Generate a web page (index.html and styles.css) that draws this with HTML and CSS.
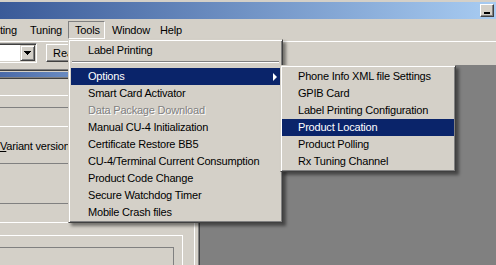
FILE: index.html
```html
<!DOCTYPE html>
<html>
<head>
<meta charset="utf-8">
<link rel="stylesheet" href="styles.css">
</head>
<body>
<div class="window">
  <div class="titlebar">
    <div class="capbtn"><span class="min-glyph"></span></div>
  </div>
  <div class="menubar">
    <span class="mi mi-ting">ting</span>
    <span class="mi mi-tuning">Tuning</span>
    <span class="mi mi-tools active">Tools</span>
    <span class="mi mi-window">Window</span>
    <span class="mi mi-help">Help</span>
  </div>
  <div class="toolbar">
    <div class="combo">
      <div class="combo-field"></div>
      <div class="combo-btn"><svg class="down" width="7" height="4" viewBox="0 0 7 4"><path d="M0 0H7L3.5 4Z" fill="#000"/></svg></div>
    </div>
    <div class="btn">Read</div>
  </div>
  <div class="client">
    <div class="child">
      <div class="c-edge"></div>
      <div class="c-bar"></div>
      <div class="c-body">
        <div class="r1"></div>
        <div class="r2"></div>
        <div class="lbl"><span class="ul">V</span>ariant version</div>
        <div class="r4"></div>
        <div class="r5"></div>
        <div class="r6"><div class="r6-inner"></div></div>
      </div>
    </div>
    <div class="mdi"></div>
  </div>

  <div class="menu main-menu">
    <div class="item">Label Printing</div>
    <div class="sep"></div>
    <div class="item hl">Options<span class="arrow"></span></div>
    <div class="item">Smart Card Activator</div>
    <div class="item disabled">Data Package Download</div>
    <div class="item">Manual CU-4 Initialization</div>
    <div class="item">Certificate Restore BB5</div>
    <div class="item">CU-4/Terminal Current Consumption</div>
    <div class="item">Product Code Change</div>
    <div class="item">Secure Watchdog Timer</div>
    <div class="item">Mobile Crash files</div>
  </div>

  <div class="menu sub-menu">
    <div class="item">Phone Info XML file Settings</div>
    <div class="item">GPIB Card</div>
    <div class="item">Label Printing Configuration</div>
    <div class="item hl">Product Location</div>
    <div class="item">Product Polling</div>
    <div class="item">Rx Tuning Channel</div>
  </div>
</div>
</body>
</html>
```
FILE: styles.css
```css
html, body {
  margin: 0;
  padding: 0;
}
body {
  width: 496px;
  height: 265px;
  overflow: hidden;
  background: #d4d0c8;
  font-family: "Liberation Sans", Arial, sans-serif;
  font-size: 11px;
  color: #000;
}
.window {
  position: relative;
  width: 496px;
  height: 265px;
  overflow: hidden;
  background: #d4d0c8;
}
.titlebar {
  height: 15px;
  border-top: 2px solid #d4d0c8;
  background: linear-gradient(to right, #3a5a98, #a8ccf2);
  display: flex;
  justify-content: flex-end;
  align-items: flex-start;
  padding: 2px 2px 0 0;
}
.capbtn {
  width: 14px;
  height: 13px;
  box-sizing: border-box;
  background: #d4d0c8;
  border: 1px solid;
  border-color: #fff #404040 #404040 #fff;
  box-shadow: inset -1px -1px #808080;
  display: flex;
  align-items: flex-end;
  padding: 0 0 2px 3px;
}
.min-glyph {
  display: block;
  width: 6px;
  height: 2px;
  background: #000;
}
.menubar {
  height: 22px;
  display: flex;
  align-items: flex-start;
  letter-spacing: -0.2px;
}
.mi {
  display: block;
  box-sizing: border-box;
  height: 18px;
  margin-top: 2px;
  border: 1px solid transparent;
  padding-left: 6px;
  line-height: 16px;
  white-space: nowrap;
  overflow: hidden;
}
.mi-ting { width: 30px; margin-left: -7px; }
.mi-tuning { width: 45px; }
.mi-tools { width: 37px; }
.mi-window { width: 48px; }
.mi-help { width: 35px; }
.mi.active {
  border-color: #808080 #fff #fff #808080;
}
.toolbar {
  height: 23px;
  border-top: 1px solid #fff;
  display: flex;
  align-items: flex-start;
}
.combo {
  display: flex;
  box-sizing: border-box;
  width: 37px;
  height: 20px;
  margin-top: 1px;
  border-top: 1px solid #808080;
  border-right: 1px solid #fff;
  border-bottom: 1px solid #fff;
  box-shadow: inset 0 1px #404040, inset -1px -1px #d4d0c8;
  padding: 1px 1px 1px 0;
}
.combo-field {
  flex: 1;
  background: #fff;
}
.combo-btn {
  width: 15px;
  box-sizing: border-box;
  background: #d4d0c8;
  border: 1px solid;
  border-color: #d4d0c8 #404040 #404040 #d4d0c8;
  box-shadow: inset 1px 1px #fff, inset -1px -1px #808080;
  display: flex;
  align-items: center;
  justify-content: center;
}
.down { display: block; shape-rendering: crispEdges; }
.btn {
  box-sizing: border-box;
  height: 18px;
  width: 70px;
  margin: 2px 0 0 9px;
  border: 1px solid;
  border-color: #fff #404040 #404040 #fff;
  box-shadow: inset -1px -1px #808080;
  padding-left: 6px;
  line-height: 16px;
}
.client {
  display: flex;
  height: 200px;
}
.mdi {
  flex: 1;
  background: #808080;
}
.child {
  width: 200px;
  box-sizing: border-box;
  background: #d4d0c8;
  border-right: 1px solid #404040;
  box-shadow: inset -1px 0 #808080;
  padding-top: 4px;
  display: flex;
  flex-direction: column;
}
.c-edge {
  height: 0;
  border-top: 1px solid #808080;
  border-bottom: 1px solid #404040;
  margin-bottom: 1px;
}
.c-bar {
  height: 21px;
  background: linear-gradient(to right, #4a6aa8, #a6caf0);
  border-bottom: 1px solid #808080;
  box-shadow: 0 1px #404040;
  margin-bottom: 1px;
}
.c-body {
  flex: 1;
  margin-right: 4px;
  border-right: 1px solid #fff;
  display: flex;
  flex-direction: column;
  align-items: flex-start;
}
.r1 {
  width: 190px;
  height: 16px;
  border-bottom: 1px solid #fff;
}
.r2 {
  width: 190px;
  height: 18px;
  margin-top: 11px;
  border-top: 1px solid #808080;
  border-bottom: 1px solid #fff;
}
.lbl {
  margin-top: 12px;
  line-height: 14px;
  white-space: nowrap;
  letter-spacing: -0.2px;
}
.ul { text-decoration: underline; }
.r4 {
  width: 190px;
  height: 39px;
  margin-top: 10px;
  border-top: 1px solid #808080;
}
.r5 {
  width: 173px;
  box-sizing: border-box;
  height: 20px;
  border-top: 1px solid #808080;
  border-right: 1px solid #fff;
  border-bottom: 1px solid #fff;
}
.r6 {
  width: 183px;
  box-sizing: border-box;
  height: 30px;
  margin-top: 12px;
  border-top: 1px solid #fff;
  border-right: 1px solid #fff;
  padding-top: 11px;
}
.r6-inner {
  width: 174px;
  box-sizing: border-box;
  height: 20px;
  border-top: 1px solid #808080;
  border-right: 1px solid #808080;
}
.menu {
  position: absolute;
  box-sizing: border-box;
  background: #d4d0c8;
  border: 1px solid;
  border-color: #d4d0c8 #404040 #404040 #d4d0c8;
  box-shadow: inset 1px 1px #fff, inset -1px -1px #808080, 3px 3px 3px rgba(0,0,0,0.45);
  letter-spacing: -0.2px;
}
.main-menu {
  left: 68px;
  top: 39px;
  width: 215px;
  padding: 2px 2px 1px 2px;
  z-index: 1;
}
.sub-menu {
  left: 280px;
  top: 65px;
  width: 176px;
  padding: 2px 1px 1px 1px;
  z-index: 2;
}
.item {
  height: 17px;
  line-height: 17px;
  white-space: nowrap;
  display: flex;
  align-items: center;
}
.main-menu .item { padding-left: 17px; }
.sub-menu .item { padding-left: 16px; }
.item.hl {
  background: #0a246a;
  color: #fff;
}
.item.disabled {
  color: #808080;
  text-shadow: 1px 1px 0 #fff;
}
.sep {
  height: 0;
  border-top: 1px solid #808080;
  border-bottom: 1px solid #fff;
  margin: 2px 1px 5px;
}
.arrow {
  margin-left: auto;
  margin-right: 3px;
  width: 0;
  height: 0;
  border-left: 4px solid #fff;
  border-top: 4px solid transparent;
  border-bottom: 4px solid transparent;
}
```
